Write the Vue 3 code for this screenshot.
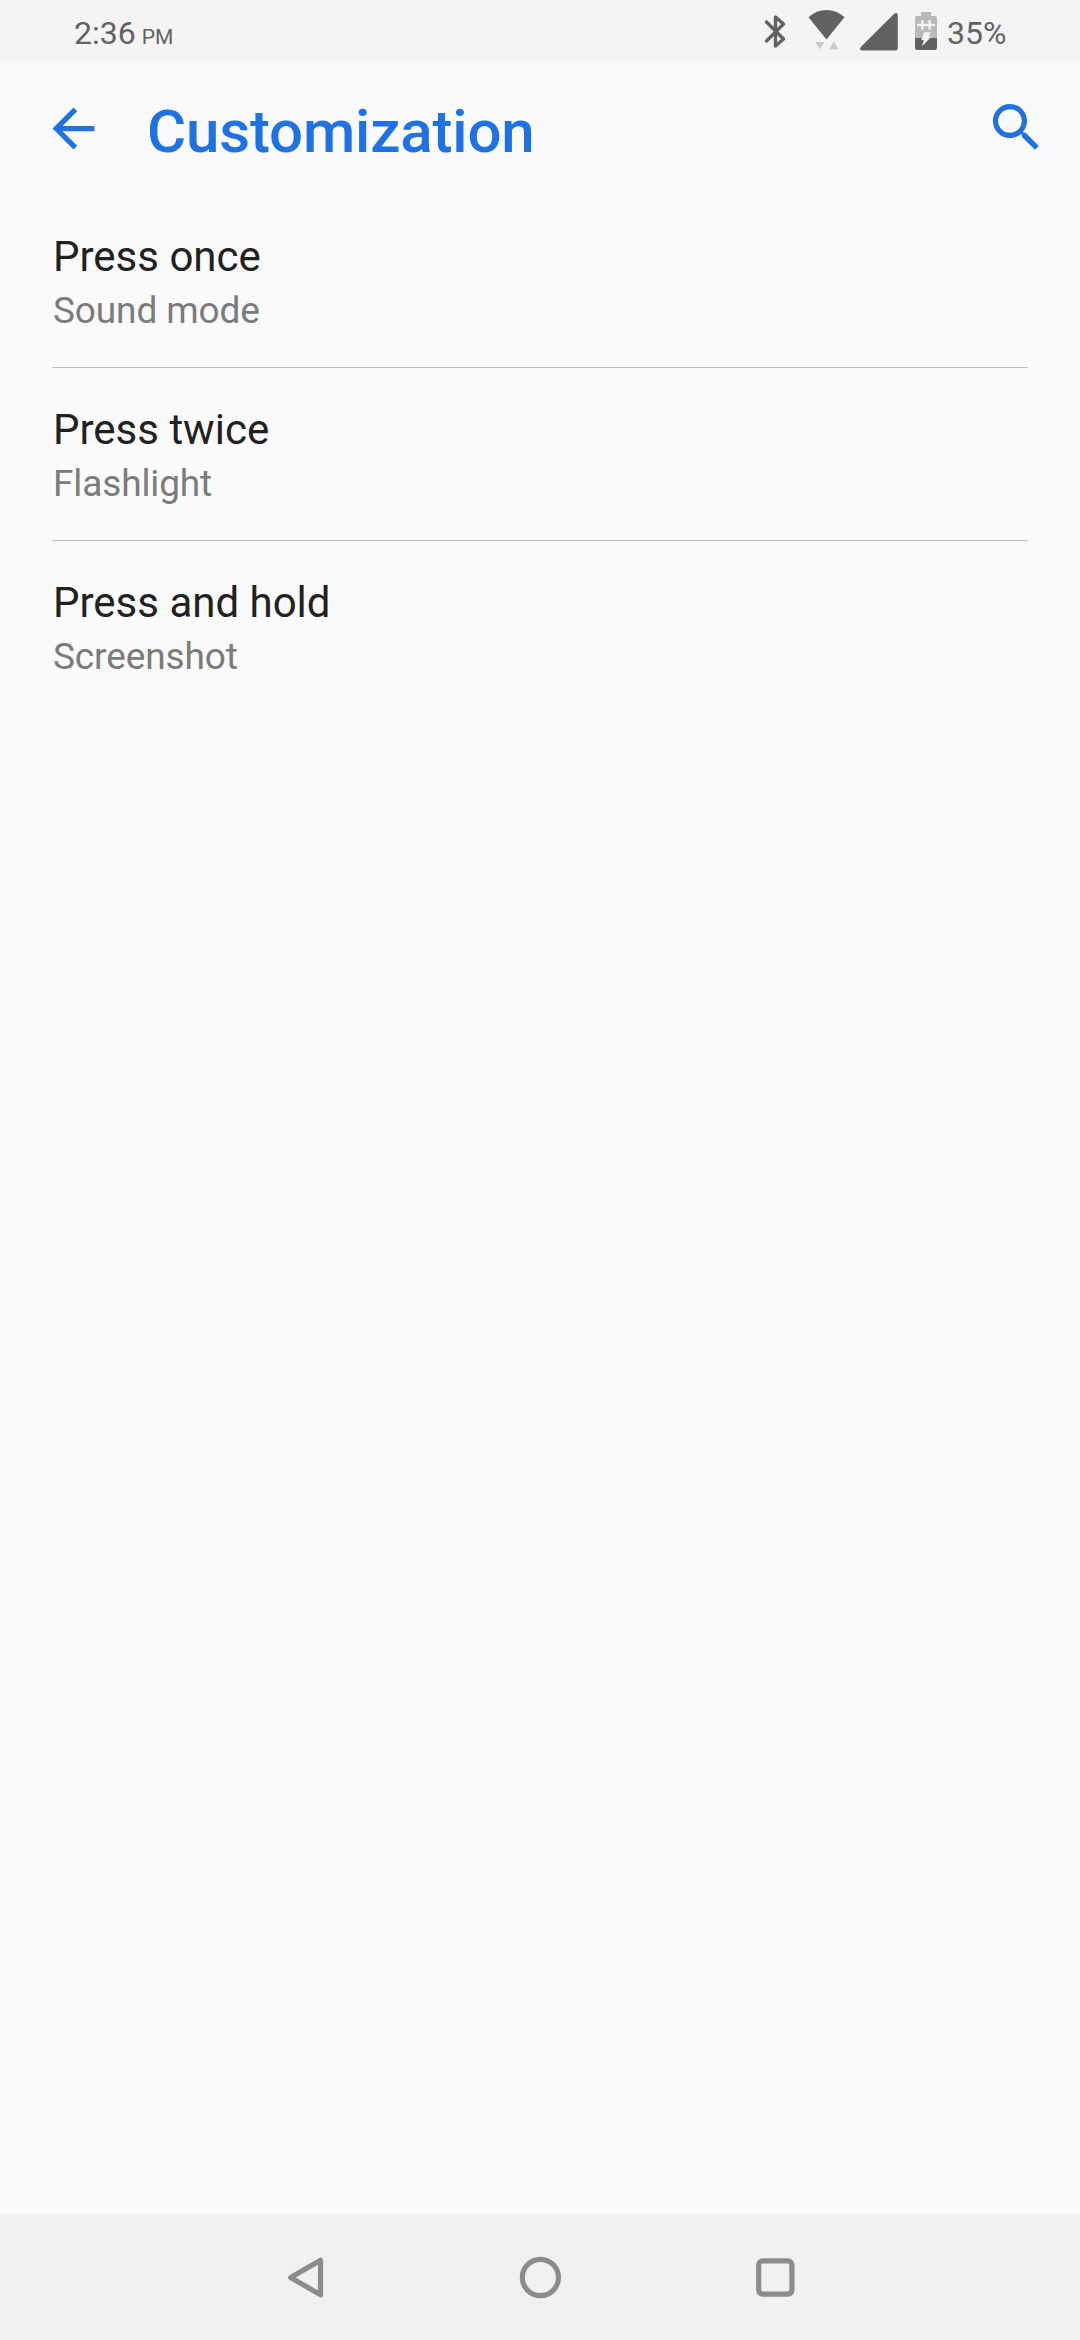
<template>
    <div class="screen">
        <header class="status-bar">
            <span class="clock">2:36<small class="meridiem">PM</small></span>

            <svg class="bluetooth" width="30" height="63" viewBox="0 0 30 63" aria-label="Bluetooth">
                <path d="M6.5 22 L23.5 39 L15.5 46 V17 L23.5 24 L6.5 41" />
            </svg>
            <svg class="wifi" width="43" height="63" viewBox="0 0 43 63" aria-label="Wi-Fi">
                <path class="solid" d="M3.5 17.2 Q11.5 10 21.5 10 Q31.5 10 39.5 17.2 L21.5 39.5z" />
                <path class="traffic" d="M10 42h9.5l-4.7 7.2z M24 49.2h9.5l-4.7-7.8z" />
            </svg>
            <svg class="signal" width="42" height="63" viewBox="0 0 42 63" aria-label="Signal">
                <path class="solid" d="M36.2 13.8 Q39.6 11.8 39.8 15.5 V48.3 Q39.8 50.6 37.5 50.6 H4.2 Q0.8 50 2.8 47z" />
            </svg>
            <svg class="battery" width="28" height="63" viewBox="0 0 28 63" aria-label="Battery">
                <path class="empty" d="M9 12h10v4h4q2 0 2 2v20H3V18q0-2 2-2h4z" />
                <path class="solid" d="M3 38h22v10q0 2-2 2H5q-2 0-2-2z" />
                <path class="mark" d="M9.2 20h2.4v3.7h4.8V20h2.4v3.7H23v2.3h-4.2v3.5h-2.4V26h-4.8v3.5H9.2V26H5v-2.3h4.2z" />
                <path class="mark" d="M12 32.3h7l-2.4 4.2h2.9l-9.5 9.8 1.8-6.3H9.3z" />
            </svg>
            <span class="percent">35%</span>
        </header>

        <div class="app-bar">
            <a class="icon-link back" href="#" aria-label="Back" @click.prevent>
                <svg width="63" height="63" viewBox="0 0 24 24">
                    <path d="M20 11H7.83l5.59-5.59L12 4l-8 8 8 8 1.41-1.41L7.83 13H20v-2z" />
                </svg>
            </a>
            <h1 class="title">Customization</h1>
            <a class="icon-link search" href="#" aria-label="Search" @click.prevent>
                <svg width="63" height="63" viewBox="0 0 24 24">
                    <path d="M15.5 14h-.79l-.28-.27C15.41 12.59 16 11.11 16 9.5 16 5.91 13.09 3 9.5 3S3 5.91 3 9.5 5.91 16 9.5 16c1.61 0 3.09-.59 4.23-1.57l.27.28v.79l5 4.99L20.49 19l-4.99-5zm-6 0C7.01 14 5 11.99 5 9.5S7.01 5 9.5 5 14 7.01 14 9.5 11.99 14 9.5 14z" />
                </svg>
            </a>
        </div>

        <ul class="options">
            <li v-for="option in options" :key="option.title" class="option">
                <div class="option-title">{{ option.title }}</div>
                <div class="option-value">{{ option.value }}</div>
            </li>
        </ul>

        <nav class="nav-bar">
            <svg width="60" height="60" viewBox="0 0 60 60" aria-label="Back">
                <path d="M14.7 30.5 L44.5 13.2 V47.8z" />
            </svg>
            <svg width="60" height="60" viewBox="0 0 60 60" aria-label="Home">
                <circle cx="30.4" cy="30.5" r="18.1" />
            </svg>
            <svg width="60" height="60" viewBox="0 0 60 60" aria-label="Recents">
                <rect x="14.7" y="13.9" width="33.2" height="33.2" rx="4" />
            </svg>
        </nav>
    </div>
</template>

<script setup>
import { ref } from 'vue';

    const options = ref([
        { title: 'Press once', value: 'Sound mode' },
        { title: 'Press twice', value: 'Flashlight' },
        { title: 'Press and hold', value: 'Screenshot' }
    ]);
</script>

<style>
body {
    margin: 0;
    background-color: #fafafa;
}
</style>

<style scoped>
.screen {
    display: flex;
    flex-direction: column;
    width: 1080px;
    height: 2340px;
    background-color: #fafafa;
    font-family: Roboto, sans-serif;
}

.screen svg {
    display: block;
    flex: none;
}

.status-bar {
    display: flex;
    height: 63px;
    background-color: #f4f4f4;
    color: #626262;
    font-size: 32px;
    line-height: 66px;
    white-space: nowrap;
}

.clock {
    width: 686px;
    padding-left: 74px;
}

.meridiem {
    margin-left: 6px;
    font-size: 21px;
}

.bluetooth path {
    fill: none;
    stroke: #626262;
    stroke-width: 3.4;
    stroke-linecap: round;
    stroke-linejoin: round;
}

.solid {
    fill: #626262;
}

.traffic {
    fill: #cacaca;
}

.empty {
    fill: #b9b9b9;
}

.mark {
    fill: #f4f4f4;
}

.wifi {
    margin-left: 15px;
}

.signal {
    margin-left: 10px;
}

.battery {
    margin-left: 12px;
}

.percent {
    margin-left: 7px;
}

.app-bar {
    display: flex;
    align-items: center;
    height: 132px;
    padding: 0 32px 0 42px;
}

.icon-link {
    fill: #1f72e0;
}

.back {
    padding-bottom: 2px;
}

.search {
    margin-left: auto;
    padding-bottom: 4px;
}

.title {
    margin: 0 0 0 42px;
    padding-top: 5px;
    color: #1f72e3;
    font-size: 60px;
    font-weight: 500;
    letter-spacing: -0.15px;
    line-height: 70px;
}

.options {
    flex: 1;
    margin: 0;
    padding: 0 52px;
    list-style: none;
}

.option {
    box-sizing: border-box;
    height: 173px;
    padding: 37px 1px 0;
    border-bottom: 1px solid #bdbdbd;
}

.option:last-child {
    border-bottom: none;
}

.option-title {
    color: #212121;
    font-size: 42px;
    line-height: 50px;
}

.option-value {
    margin-top: 7px;
    color: #7b7b7b;
    font-size: 37px;
    letter-spacing: -0.12px;
    line-height: 44px;
}

.nav-bar {
    display: flex;
    align-items: center;
    justify-content: center;
    gap: 174px;
    height: 126px;
    background-color: #f1f1f1;
}

.nav-bar svg * {
    fill: none;
    stroke: #8c8c8c;
    stroke-width: 5.2;
    stroke-linejoin: round;
}
</style>
